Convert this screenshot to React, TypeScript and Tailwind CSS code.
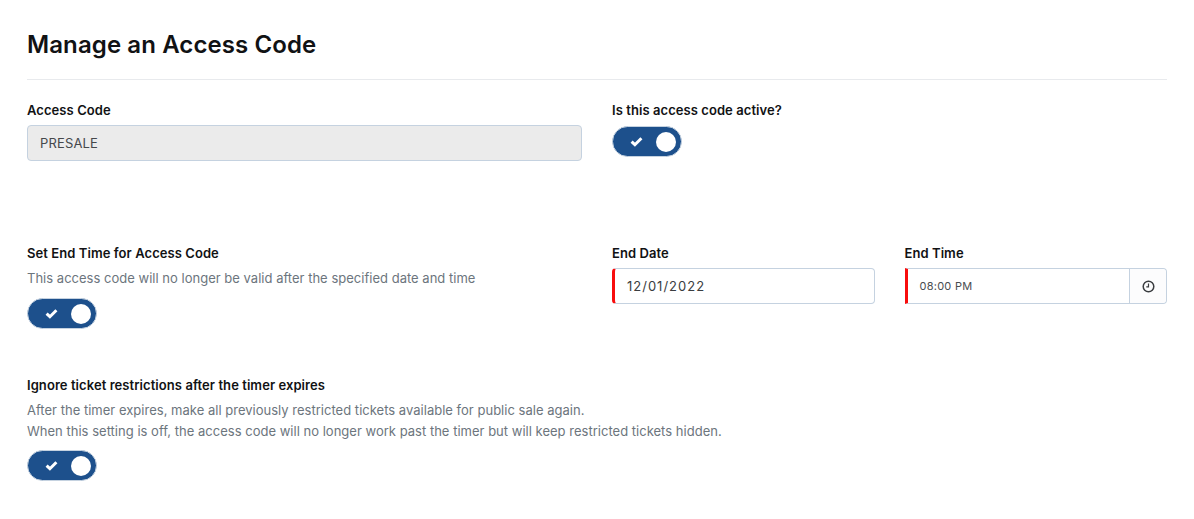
const font = { fontFamily: 'Inter, "Noto Sans", sans-serif' };

function Toggle() {
  return (
    <div className="flex h-[31px] w-[70px] items-center rounded-full border border-[#c5d2e0] bg-[#1d508c] pl-[17px] pr-[5px]">
      <svg width="13" height="11" viewBox="0 0 13 11">
        <path d="M1.6 5.6 L4.9 8.7 L11.4 2.2" fill="none" stroke="#fff" strokeWidth="3" />
      </svg>
      <div className="ml-auto h-[20px] w-[20px] rounded-full bg-white" />
    </div>
  );
}

function Label({ children }: { children: React.ReactNode }) {
  return <div className="text-[13px] font-semibold leading-[20px] tracking-[0.07px] text-[#111214]">{children}</div>;
}

export default function App() {
  return (
    <div className="h-[519px] w-[1194px] overflow-hidden bg-white px-[27px] antialiased" style={font}>
      <div className="border-b border-[#e8eaed] pt-[29px] pb-[19px]">
        <h1 className="text-[24px] font-semibold leading-[31px] tracking-[0.1px] text-[#111214]">Manage an Access Code</h1>
      </div>

      <div className="grid grid-cols-2 gap-x-[30px] pt-[20px]">
        <div className="h-[143px]">
          <Label>Access Code</Label>
          <div className="mt-[5px] flex h-[36px] items-center rounded border border-[#c5d2e0] bg-[#ebebeb] px-[12px] pt-[1px] text-[13px] tracking-[0.15px] text-[#45484b]">
            PRESALE
          </div>
        </div>
        <div className="h-[143px]">
          <Label>Is this access code active?</Label>
          <div className="mt-[6px]"><Toggle /></div>
        </div>

        <div className="h-[132px]">
          <Label>Set End Time for Access Code</Label>
          <p className="mt-[5px] text-[13px] leading-[20px] tracking-[0.015px] text-[#6c757d]">
            This access code will no longer be valid after the specified date and time
          </p>
          <div className="mt-[10px]"><Toggle /></div>
        </div>
        <div className="grid h-[132px] grid-cols-2 gap-x-[30px]">
          <div>
            <Label>End Date</Label>
            <div className="mt-[5px] flex h-[36px] items-center rounded border border-l-[3px] border-[#c5d2e0] border-l-[#f80d0d] bg-white pl-[12px] pt-[1px] text-[13px] tracking-[1px] text-[#3a3d40]">
              12/01/2022
            </div>
          </div>
          <div>
            <Label>End Time</Label>
            <div className="mt-[5px] flex h-[36px] items-center rounded-r border border-l-[3px] border-[#c5d2e0] border-l-[#f80d0d] bg-white text-[11px] tracking-[0.25px] text-[#4a4d50]">
              <span className="flex-1 pl-[12px]">08:00 PM</span>
              <span className="flex h-full w-[37px] items-center justify-center rounded-r border-l border-[#c5d2e0] bg-[#fcfcfd]">
                <svg width="13" height="13" viewBox="0 0 13 13">
                  <circle cx="6.5" cy="6.5" r="5.3" fill="none" stroke="#3a3d40" strokeWidth="1.5" />
                  <path d="M6.5 3.5 V6.8 H4.3" fill="none" stroke="#3a3d40" strokeWidth="1.2" />
                </svg>
              </span>
            </div>
          </div>
        </div>
      </div>

      <div>
        <Label>Ignore ticket restrictions after the timer expires</Label>
        <p className="mt-[5px] text-[13px] leading-[21px] tracking-[0.015px] text-[#6c757d]">
          After the timer expires, make all previously restricted tickets available for public sale again.
          <br />
          When this setting is off, the access code will no longer work past the timer but will keep restricted tickets hidden.
        </p>
        <div className="mt-[8px]"><Toggle /></div>
      </div>
    </div>
  );
}
